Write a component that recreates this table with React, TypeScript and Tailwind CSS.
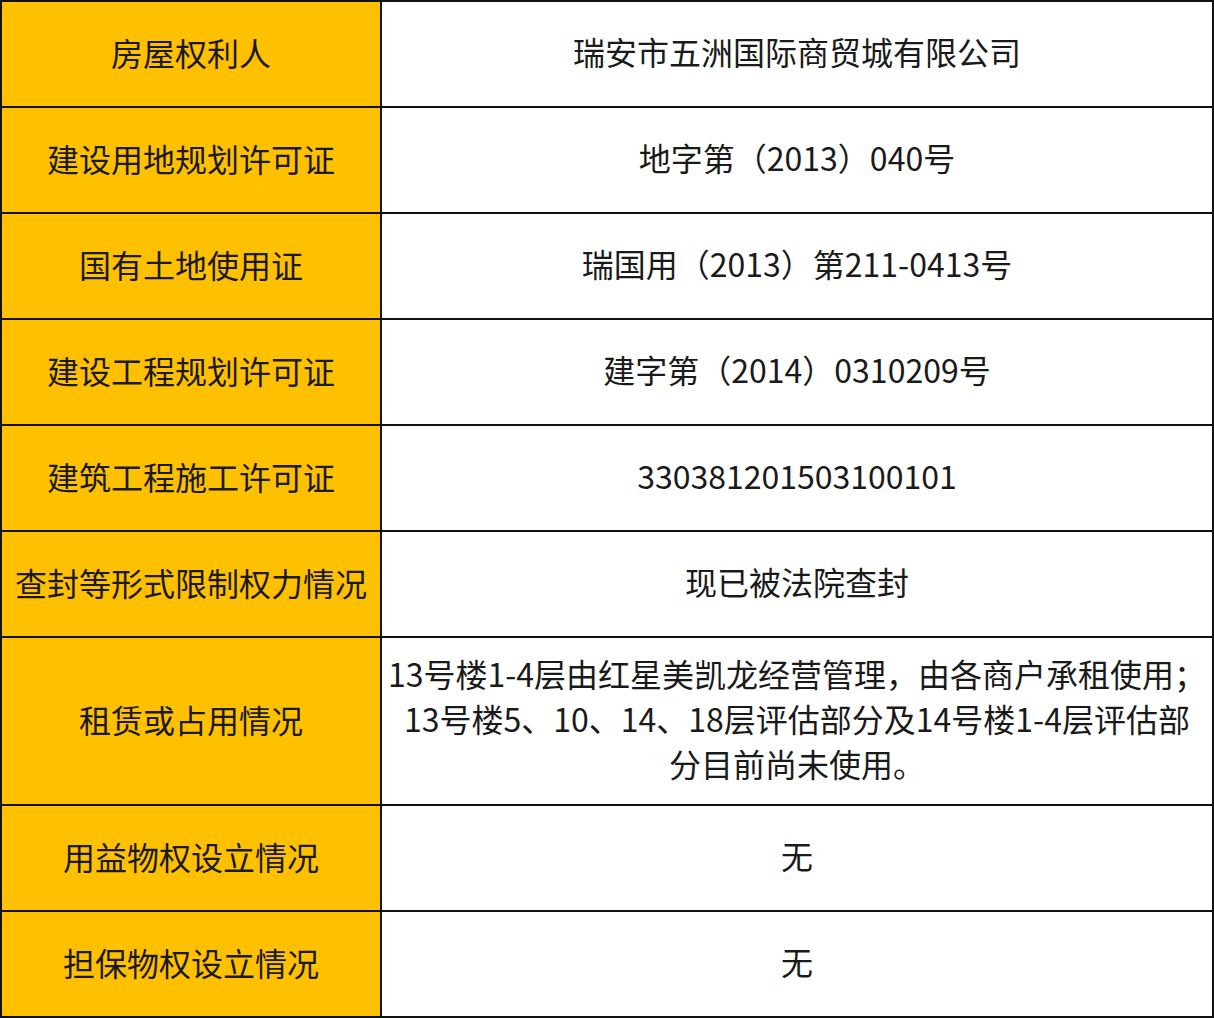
// App.tsx — property info table: yellow label column, white value column.

const ROWS: { label: string; value: string[]; tall?: boolean }[] = [
  { label: "房屋权利人", value: ["瑞安市五洲国际商贸城有限公司"] },
  { label: "建设用地规划许可证", value: ["地字第（2013）040号"] },
  { label: "国有土地使用证", value: ["瑞国用（2013）第211-0413号"] },
  { label: "建设工程规划许可证", value: ["建字第（2014）0310209号"] },
  { label: "建筑工程施工许可证", value: ["330381201503100101"] },
  { label: "查封等形式限制权力情况", value: ["现已被法院查封"] },
  {
    label: "租赁或占用情况",
    value: [
      "13号楼1-4层由红星美凯龙经营管理，由各商户承租使用；",
      "13号楼5、10、14、18层评估部分及14号楼1-4层评估部",
      "分目前尚未使用。",
    ],
    tall: true,
  },
  { label: "用益物权设立情况", value: ["无"] },
  { label: "担保物权设立情况", value: ["无"] },
];

export default function App() {
  return (
    <div
      className="flex h-[1018px] w-[1214px] flex-col border-2 border-[#111] bg-white text-[#1a1a1a]"
      style={{ fontFamily: '"Noto Sans CJK SC", "Noto Sans", sans-serif' }}
    >
      {ROWS.map((row, i) => {
        const last = i === ROWS.length - 1;
        return (
          <div
            key={i}
            className={`flex shrink-0 ${
              row.tall ? "h-[168px]" : last ? "h-[104px]" : "h-[106px]"
            } ${last ? "" : "border-b-2 border-[#111]"}`}
          >
            {/* label cell */}
            <div className="flex w-[380px] shrink-0 items-center justify-center border-r-2 border-[#111] bg-[#ffc000] pb-[4px] text-[32px] whitespace-nowrap">
              {row.label}
            </div>
            {/* value cell */}
            <div className="flex flex-1 flex-col items-center justify-center pb-[5px] text-[32px] leading-[45px] whitespace-nowrap">
              {row.value.map((line, j) => (
                <div key={j}>{line}</div>
              ))}
            </div>
          </div>
        );
      })}
    </div>
  );
}
